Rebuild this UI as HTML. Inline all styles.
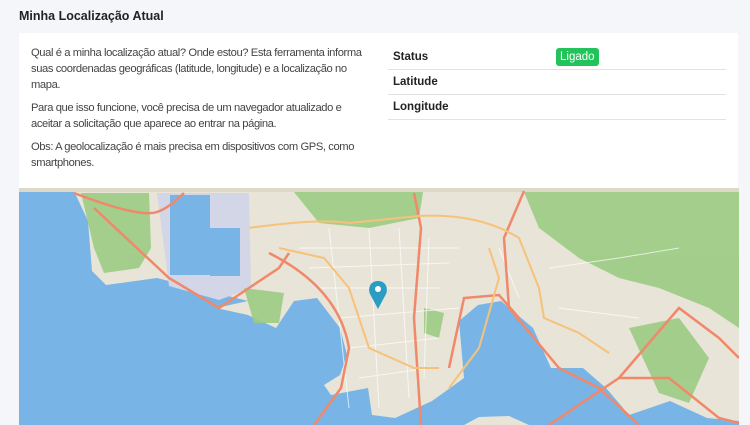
<!DOCTYPE html>
<html><head><meta charset="utf-8"><style>
*{margin:0;padding:0;box-sizing:border-box}
body{width:750px;height:425px;overflow:hidden;background:#f4f6fa;font-family:"Liberation Sans",Arial,sans-serif;color:#333;position:relative}
h1{position:absolute;left:19px;top:9px;font-size:12.5px;font-weight:bold;color:#222}
.card{position:absolute;left:19px;top:33px;width:719px;height:157px;background:#fff}
.txt{position:absolute;left:12px;top:12px;width:342px;font-size:11.2px;letter-spacing:-0.4px;line-height:16px;color:#444}
.txt p{margin-bottom:7px}
.tbl{position:absolute;left:369px;top:12px;width:338px}
.row{height:25px;border-bottom:1px solid #e3e3e3;font-size:11.5px;font-weight:bold;color:#222;padding:6px 0 0 5px;position:relative}
.badge{position:absolute;left:168px;top:3px;background:#22c35a;color:#fff;font-weight:normal;font-size:11.5px;padding:3px 4px;border-radius:3px}
.map{position:absolute;left:19px;top:188px;width:720px;height:237px;overflow:hidden}
</style></head><body>
<h1>Minha Localização Atual</h1>
<div class="card">
<div class="txt">
<p>Qual é a minha localização atual? Onde estou? Esta ferramenta informa suas coordenadas geográficas (latitude, longitude) e a localização no mapa.</p>
<p>Para que isso funcione, você precisa de um navegador atualizado e aceitar a solicitação que aparece ao entrar na página.</p>
<p>Obs: A geolocalização é mais precisa em dispositivos com GPS, como smartphones.</p>
</div>
<div class="tbl">
<div class="row">Status<span class="badge">Ligado</span></div>
<div class="row">Latitude</div>
<div class="row">Longitude</div>
</div>
</div>
<div class="map">
<svg width="720" height="237" viewBox="0 0 720 237">
<rect width="720" height="237" fill="#78b5e6"/>
<polygon fill="#e8e4d8" points="55,0 55,3 69,33 73,83 87,97 138,90 229,113 197,120 229,127 257,140 275,113 298,110 321,140 328,167 321,187 305,197 312,207 349,200 353,227 376,230 413,213 445,190 440,133 459,117 482,113 514,140 532,180 564,180 587,200 610,227 651,213 688,230 720,233 720,0"/>
<polygon fill="#e8e4d8" points="445,237 460,229 490,228 510,237"/>
<rect x="0" y="0" width="720" height="4" fill="#ddd9c8"/>
<polygon fill="#d3d6e6" points="138,5 230,5 232,100 200,112 150,98"/>
<rect x="151" y="7" width="40" height="80" fill="#78b5e6"/>
<rect x="191" y="40" width="30" height="48" fill="#78b5e6"/>
<g fill="#9ccb83" opacity=".9">
<path d="M62,5 L130,5 L132,60 L120,80 L85,85 L75,60 Z"/>
<path d="M275,4 L404,4 L400,30 L350,40 L300,35 Z"/>
<path d="M505,4 L720,4 L720,140 L690,120 L640,100 L600,90 L560,70 L520,40 Z"/>
<path d="M610,140 L660,130 L690,170 L670,215 L640,205 Z"/>
<path d="M225,100 L265,105 L260,135 L235,135 Z"/>
<path d="M405,120 L425,125 L420,150 L405,145 Z"/>
</g>
<g fill="none" stroke="#fff" stroke-width="1" opacity=".7">
<path d="M280,60 L440,60 M290,80 L430,75 M300,100 L420,100 M320,130 L440,120 M330,160 L420,150 M340,190 L410,180 M310,40 L330,220 M350,40 L360,220 M380,40 L390,210 M410,50 L405,190 M480,60 L500,110 M530,80 L600,70 L660,60 M540,120 L620,130"/>
</g>
<g fill="none" stroke="#f1886a" stroke-width="2.5">
<path d="M55,5 Q120,30 138,24 Q150,20 165,5"/>
<path d="M75,20 L150,90 L200,120 L260,80 L270,65"/>
<path d="M250,65 Q320,100 330,160 L322,200 L295,237"/>
<path d="M395,5 L402,40 L395,130 L402,237"/>
<path d="M505,3 L485,50 L490,120 L540,180 L580,200 L620,237"/>
<path d="M530,237 L600,190 L660,120 L700,150 L720,170"/>
<path d="M430,180 L445,110 L480,107 L500,130"/>
<path d="M600,190 L650,190 L700,230 L720,235"/>
</g>
<g fill="none" stroke="#f6c27a" stroke-width="2">
<path d="M230,40 Q300,30 330,35 L400,28 Q460,25 500,50 L520,100 L525,130 L560,145 L590,165"/>
<path d="M260,60 L305,70 L330,100 L350,160 L395,180 L420,180"/>
<path d="M430,200 L460,160 L480,90 L470,60"/>
</g>
<g transform="translate(359,105)">
<path d="M0,-12 C-9,-12 -10,-3 -8,1 L0,16 L8,1 C10,-3 9,-12 0,-12 Z" fill="#2b9dc2"/>
<circle cx="0" cy="-4" r="3" fill="#fff"/>
</g>
</svg>
</div>
</body></html>
